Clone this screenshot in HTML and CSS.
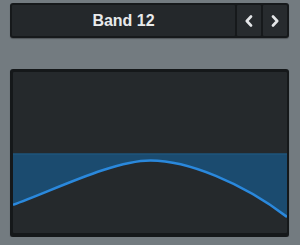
FILE: index.html
```html
<!DOCTYPE html>
<html lang="en">

<head>
    <meta charset="UTF-8">
    <meta name="viewport" content="width=device-width, initial-scale=1.0">
    <title>Band</title>
    <link rel="stylesheet" href="styles.css">
</head>

<body>
    <div class="band-bar">
        <div class="band-name">Band 12</div>
        <button class="nav-btn" aria-label="Previous">
            <svg width="10" height="12" viewBox="0 0 10 12">
                <path d="M7 1.5 L2.8 6 L7 10.5" fill="none" stroke="#e4e6e8" stroke-width="2.6" stroke-linecap="round" stroke-linejoin="round" />
            </svg>
        </button>
        <button class="nav-btn" aria-label="Next">
            <svg width="10" height="12" viewBox="0 0 10 12">
                <path d="M3 1.5 L7.2 6 L3 10.5" fill="none" stroke="#e4e6e8" stroke-width="2.6" stroke-linecap="round" stroke-linejoin="round" />
            </svg>
        </button>
    </div>

    <div class="graph">
        <div class="graph-inner">
            <svg class="curve" viewBox="0 0 275 160" preserveAspectRatio="none">
                <!-- band area above the response curve -->
                <path d="M0 81 L0 132 C40 118 100 88 138 88 C175 88 230 110 275 144 L275 81 Z" fill="#1b4b6f" />
                <line x1="0" y1="81.5" x2="275" y2="81.5" stroke="#215a82" stroke-width="1" />
                <path d="M0 132 C40 118 100 88 138 88 C175 88 230 110 275 144" fill="none" stroke="#2a88dc" stroke-width="2.6" />
            </svg>
        </div>
    </div>
</body>

</html>
```

FILE: styles.css
```css
/* band selector + response graph */

body {
    margin: 0;
    padding: 3px 11px 0 10px;
    background: #737b80;
    font-family: "Liberation Sans", Arial, sans-serif;
}

/* top bar */

.band-bar {
    display: flex;
    gap: 2px;
    height: 31px;
    padding: 2px;
    background: #16191b;
    border-radius: 3px;
    box-shadow: 0 1px 1px rgba(0, 0, 0, 0.3);
}

.band-name {
    flex: 1;
    display: flex;
    align-items: center;
    justify-content: center;
    background: #24282b;
    border-radius: 1px;
    color: #e8eaeb;
    font-weight: bold;
    font-size: 16px;
}

.nav-btn {
    display: flex;
    align-items: center;
    justify-content: center;
    width: 24px;
    padding: 0;
    border: 0;
    border-radius: 1px;
    background: #272b2e;
}

/* graph panel */

.graph {
    margin-top: 31px;
    height: 161px;
    padding: 3px 2px 4px 3px;
    background: #15181a;
    border-radius: 3px;
    box-shadow: 0 1px 1px rgba(0, 0, 0, 0.3);
}

.graph-inner {
    height: 100%;
    background: #25292c;
    border-radius: 1px;
    overflow: hidden;
}

.curve {
    display: block;
    width: 100%;
    height: 100%;
}
```
